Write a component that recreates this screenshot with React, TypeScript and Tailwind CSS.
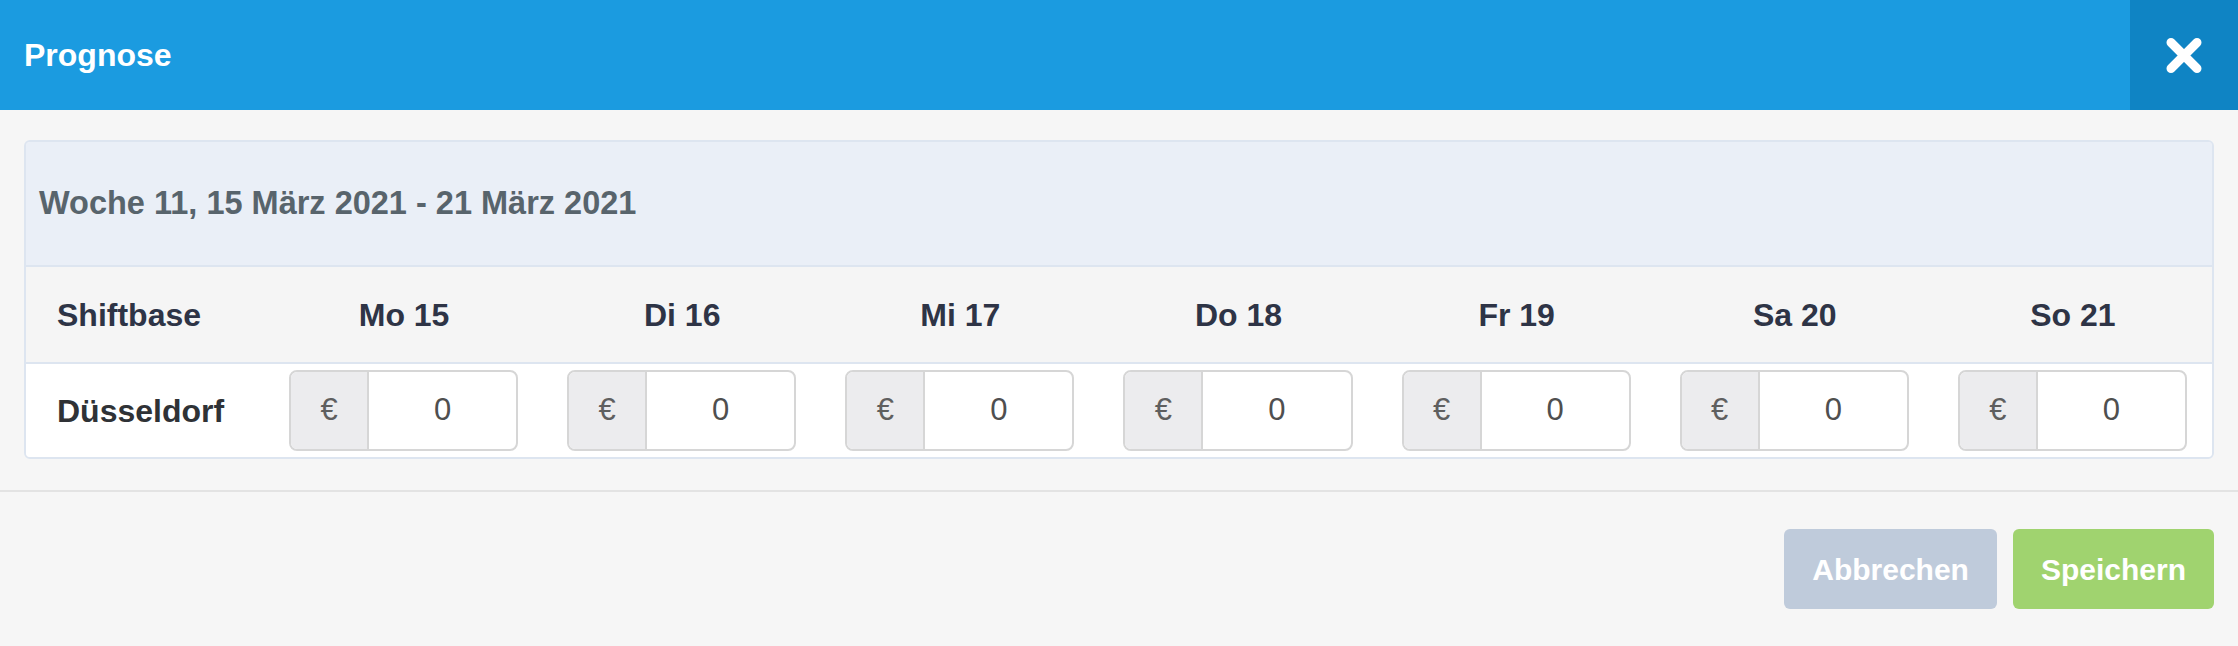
import React from "react";

const days = ["Mo 15", "Di 16", "Mi 17", "Do 18", "Fr 19", "Sa 20", "So 21"];

function MoneyInput() {
  return (
    <div className="flex h-[81px] w-full overflow-hidden rounded-[8px] border-2 border-[#d6d6d6] bg-white">
      <div className="flex w-[78px] shrink-0 items-center justify-center border-r-2 border-[#d6d6d6] bg-[#ececee] text-[31px] text-[#5f5f5f]">
        €
      </div>
      <div className="flex flex-1 items-center justify-center text-[31px] text-[#4f4f4f]">0</div>
    </div>
  );
}

export default function App() {
  return (
    <div
      className="flex h-[646px] w-[2238px] flex-col bg-[#f6f6f6]"
      style={{ fontFamily: '"Liberation Sans", Arial, sans-serif' }}
    >
      <header className="flex h-[110px] shrink-0 items-center bg-[#1b9be0]">
        <h1 className="flex-1 pl-[24px] text-[32px] font-bold text-white">Prognose</h1>
        <button className="flex h-full w-[108px] items-center justify-center bg-[#0f84c4]">
          <svg width="36" height="37" viewBox="0 0 36 37">
            <path d="M5 5.5 L31 31.5 M31 5.5 L5 31.5" stroke="white" strokeWidth="9" strokeLinecap="round" />
          </svg>
        </button>
      </header>

      <div className="px-[24px] pt-[30px]">
        <div className="overflow-hidden rounded-[6px] border-2 border-[#dde5f0]">
          <div className="flex h-[125px] items-center border-b-2 border-[#dde5f0] bg-[#eaeff7] pl-[13px] text-[32.5px] font-bold text-[#58646c]">
            Woche 11, 15 März 2021 - 21 März 2021
          </div>
          <div className="grid h-[97px] grid-cols-[239px_repeat(7,1fr)] items-center border-b-2 border-[#dde5f0] bg-[#f5f5f5] text-[32px] font-bold text-[#2e3446]">
            <div className="pl-[31px]">Shiftbase</div>
            {days.map((d) => (
              <div key={d} className="text-center">
                {d}
              </div>
            ))}
          </div>
          <div className="grid h-[93px] grid-cols-[239px_repeat(7,1fr)] items-center bg-white">
            <div className="pl-[31px] text-[32px] font-bold text-[#2f3236]">Düsseldorf</div>
            {days.map((d) => (
              <div key={d} className="pl-[24px] pr-[25px]">
                <MoneyInput />
              </div>
            ))}
          </div>
        </div>
      </div>

      <div className="mt-[31px] border-t-2 border-[#e3e3e3]" />

      <div className="flex justify-end gap-[16px] px-[24px] pt-[37px]">
        <button className="flex h-[80px] items-center rounded-[6px] bg-[#bfcbdb] px-[28px] text-[30px] font-bold text-white">
          Abbrechen
        </button>
        <button className="flex h-[80px] items-center rounded-[6px] bg-[#a0d36f] px-[28px] text-[30px] font-bold text-white">
          Speichern
        </button>
      </div>
    </div>
  );
}
